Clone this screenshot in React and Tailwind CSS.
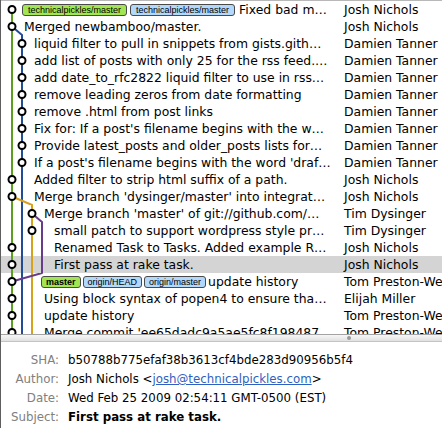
import React from 'react';

const laneColors = ['#5b9f1e', '#214d96', '#d6a11b', '#683c8a'];

// line: [edge, fromLane, toLane]  (GitX style: edge of row -> centre of row)
const pass = (l) => [['t', l, l], ['b', l, l]];

const rows = [
  { x: 22, node: 0, lines: [['b', 0, 0]], wide: true, badges: [{ t: 'technicalpickles/master', c: 'g' }, { t: 'technicalpickles/master', c: 'b' }], s: 'Fixed bad m…', a: 'Josh Nichols' },
  { x: 24, node: 0, lines: [...pass(0), ['b', 1, 0]], s: 'Merged newbamboo/master.', a: 'Josh Nichols' },
  { x: 34, node: 1, lines: [...pass(0), ...pass(1)], s: 'liquid filter to pull in snippets from gists.gith…', a: 'Damien Tanner' },
  { x: 34, node: 1, lines: [...pass(0), ...pass(1)], s: 'add list of posts with only 25 for the rss feed.…', a: 'Damien Tanner' },
  { x: 34, node: 1, lines: [...pass(0), ...pass(1)], s: 'add date_to_rfc2822 liquid filter to use in rss…', a: 'Damien Tanner' },
  { x: 34, node: 1, lines: [...pass(0), ...pass(1)], s: 'remove leading zeros from date formatting', a: 'Damien Tanner' },
  { x: 34, node: 1, lines: [...pass(0), ...pass(1)], s: 'remove .html from post links', a: 'Damien Tanner' },
  { x: 34, node: 1, lines: [...pass(0), ...pass(1)], s: "Fix for: If a post's filename begins with the w…", a: 'Damien Tanner' },
  { x: 34, node: 1, lines: [...pass(0), ...pass(1)], s: 'Provide latest_posts and older_posts lists for…', a: 'Damien Tanner' },
  { x: 34, node: 1, lines: [...pass(0), ...pass(1)], s: "If a post's filename begins with the word 'draf…", a: 'Damien Tanner' },
  { x: 34, node: 0, lines: [...pass(0), ...pass(1)], s: 'Added filter to strip html suffix of a path.', a: 'Josh Nichols' },
  { x: 34, node: 0, lines: [...pass(0), ...pass(1), ['b', 2, 0]], s: "Merge branch 'dysinger/master' into integrat…", a: 'Josh Nichols' },
  { x: 44, node: 2, lines: [...pass(0), ...pass(1), ...pass(2), ['b', 3, 2]], s: "Merge branch 'master' of git://github.com/…", a: 'Tim Dysinger' },
  { x: 54, node: 2, lines: [...pass(0), ...pass(1), ...pass(2), ...pass(3)], s: 'small patch to support wordpress style pr…', a: 'Tim Dysinger' },
  { x: 54, node: 0, lines: [...pass(0), ...pass(1), ...pass(2), ...pass(3)], s: 'Renamed Task to Tasks. Added example R…', a: 'Josh Nichols' },
  { x: 54, node: 0, lines: [...pass(0), ...pass(1), ...pass(2), ...pass(3)], s: 'First pass at rake task.', a: 'Josh Nichols', sel: true },
  { x: 41, node: 0, lines: [...pass(0), ...pass(1), ...pass(2), ['t', 3, 0]], badges: [{ t: 'master', c: 'g', bold: true }, { t: 'origin/HEAD', c: 'b' }, { t: 'origin/master', c: 'b' }], s: 'update history', a: 'Tom Preston-Werner' },
  { x: 44, node: 0, lines: [...pass(0), ...pass(1), ...pass(2)], s: 'Using block syntax of popen4 to ensure tha…', a: 'Elijah Miller' },
  { x: 44, node: 0, lines: [...pass(0), ...pass(1), ...pass(2)], s: 'update history', a: 'Tom Preston-Werner' },
  { x: 44, node: 0, lines: [...pass(0), ...pass(1), ...pass(2)], s: "Merge commit 'ee65dadc9a5ae5fc8f198487…", a: 'Tom Preston-Werner' },
];

const lx = (l) => 11 + 10 * l;

function Graph({ row }) {
  const w = row.x - 1;
  return (
    <svg width={w} height="17" className="shrink-0 overflow-visible">
      {row.lines.map(([edge, from, to], i) => (
        <line
          key={i}
          x1={lx(from)}
          y1={edge === 't' ? 0 : 17}
          x2={lx(to)}
          y2={8.5}
          stroke={laneColors[from]}
          strokeWidth="2"
          strokeLinecap="round"
        />
      ))}
      <circle cx={lx(row.node)} cy="8.5" r="3.5" fill="#fff" stroke="#000" strokeWidth="2" />
    </svg>
  );
}

function Badge({ b, wide }) {
  return (
    <span
      className={
        'flex h-[12px] shrink-0 items-center rounded-[3px] border border-[#4a4a4a] text-[9px] leading-[10px] text-black ' +
        (wide ? 'mr-[3px] px-[5px] ' : 'mr-[2px] px-[4px] ') +
        (b.c === 'g' ? 'bg-[#a1e552] ' : 'bg-[#b2d9fb] ') +
        (b.bold ? 'font-bold' : '')
      }
      style={{ fontFamily: '"Liberation Sans", Arial, sans-serif' }}
    >
      {b.t}
    </span>
  );
}

function Row({ row }) {
  return (
    <div className={'flex h-[17px] items-center leading-[17px] ' + (row.sel ? 'bg-[#d4d4d4]' : '')}>
      <div className="flex w-[338px] shrink-0 items-center overflow-hidden whitespace-nowrap">
        <Graph row={row} />
        {row.badges && row.badges.map((b, i) => <Badge key={i} b={b} wide={row.wide} />)}
        <span className={'whitespace-nowrap ' + (row.wide ? 'pl-[1px]' : '')}>{row.s}</span>
      </div>
      <div className="shrink-0 whitespace-nowrap pl-[5px]">{row.a}</div>
    </div>
  );
}

export default function App() {
  return (
    <div
      className="flex h-[428px] w-[442px] flex-col overflow-hidden border-l border-[#5e5e5e] bg-white text-black"
      style={{ fontFamily: '"DejaVu Sans", Verdana, sans-serif' }}
    >
      {/* commit list */}
      <div className="h-[334px] shrink-0 overflow-hidden border-t border-[#b8b8b8] text-[12.4px]">
        {rows.map((r, i) => (
          <Row key={i} row={r} />
        ))}
      </div>

      {/* splitter */}
      <div className="flex h-[8px] shrink-0 items-center border-t border-[#a3a3a3] border-b border-b-[#c4c4c4] bg-gradient-to-b from-[#f7f7f7] to-[#e1e1e1]">
        <div className="ml-[346px] h-[4px] w-[4px] rounded-full bg-[#9a9a9a]" />
      </div>

      {/* commit details */}
      <div className="grid grid-cols-[58px_1fr] gap-x-[9px] pt-[9px] text-[11.8px] leading-[19px]">
        <div className="text-right text-[#808080]">SHA:</div>
        <div>b50788b775efaf38b3613cf4bde283d90956b5f4</div>
        <div className="text-right text-[#808080]">Author:</div>
        <div className="whitespace-nowrap">
          Josh Nichols &lt;<span className="text-[#2f5fc1] underline">josh@technicalpickles.com</span>&gt;
        </div>
        <div className="text-right text-[#808080]">Date:</div>
        <div>Wed Feb 25 2009 02:54:11 GMT-0500 (EST)</div>
        <div className="text-right text-[#808080]">Subject:</div>
        <div className="font-bold">First pass at rake task.</div>
      </div>
    </div>
  );
}
